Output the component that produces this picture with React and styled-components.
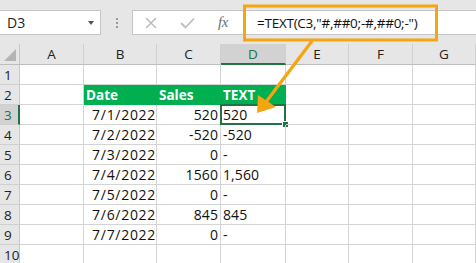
import React from "react"
import styled, { createGlobalStyle, css } from "styled-components"

const GlobalStyle = createGlobalStyle`
  html, body { margin: 0; padding: 0; background: #fff; }
  body { font-family: "Open Sans", "Liberation Sans", sans-serif; overflow: hidden; }
`

const Page = styled.div`
  position: relative;
  width: 476px;
  height: 263px;
  overflow: hidden;
  background: #fff;
`

const FormulaBar = styled.div`
  display: flex;
  align-items: center;
  height: 44px;
  background: #e6e6e6;
  box-sizing: border-box;
  padding-top: 1px;
`

const NameBox = styled.div`
  display: flex;
  align-items: center;
  justify-content: space-between;
  width: 101px;
  height: 25px;
  box-sizing: border-box;
  background: #fff;
  border: 1px solid #c6c6c6;
  border-left: none;
  padding: 0 6px 0 7px;
  font-size: 14px;
  color: #222;
`

const Caret = styled.span`
  width: 0;
  height: 0;
  border-left: 3.5px solid transparent;
  border-right: 3.5px solid transparent;
  border-top: 4px solid #555;
`

const Dots = styled.div`
  width: 31px;
  display: flex;
  flex-direction: column;
  align-items: center;
  gap: 2px;
  span {
    width: 2px;
    height: 2px;
    background: #9a9a9a;
  }
`

const FormulaBox = styled.div`
  flex: 1;
  display: flex;
  align-items: center;
  height: 25px;
  box-sizing: border-box;
  background: #fff;
  border: 1px solid #c6c6c6;
  border-right: none;
`

const IconSlot = styled.div`
  width: ${p => p.w}px;
  display: flex;
  justify-content: center;
  align-items: center;
`

const Fx = styled.span`
  font-family: "Liberation Serif", serif;
  font-style: italic;
  font-size: 15px;
  color: #6f6f6f;
  letter-spacing: -0.5px;
`

const FormulaText = styled.div`
  margin-left: 16px;
  font-size: 13.5px;
  color: #111;
  white-space: nowrap;
  letter-spacing: -0.25px;
`

const Grid = styled.div`
  display: grid;
  grid-template-columns: 20px 64px 73px 64px 65px 63px 64px 1fr;
  grid-template-rows: 21px repeat(10, 20px);
`

const headerBase = css`
  background: ${p => (p.active ? "#d2d2d2" : "#e6e6e6")};
  color: ${p => (p.active ? "#217346" : "#222")};
  font-size: 13.5px;
  box-sizing: border-box;
  display: flex;
  align-items: center;
`

const Corner = styled.div`
  ${headerBase};
  position: relative;
  border-right: 1px solid #c8c8c8;
  border-bottom: 1px solid #bdbdbd;
  &::after {
    content: "";
    position: absolute;
    right: 3px;
    bottom: 3px;
    width: 0;
    height: 0;
    border-left: 12px solid transparent;
    border-bottom: 12px solid #b4b4b4;
  }
`

const ColHead = styled.div`
  ${headerBase};
  justify-content: center;
  border-right: 1px solid #d0d0d0;
  border-bottom: ${p => (p.active ? "2px solid #217346" : "1px solid #bdbdbd")};
  padding-top: ${p => (p.active ? "1px" : "0")};
`

const RowHead = styled.div`
  ${headerBase};
  padding-left: 4px;
  border-right: ${p => (p.active ? "2px solid #217346" : "1px solid #c8c8c8")};
  border-bottom: 1px solid #d0d0d0;
`

const Cell = styled.div`
  position: relative;
  box-sizing: border-box;
  display: flex;
  align-items: center;
  justify-content: ${p => (p.right ? "flex-end" : "flex-start")};
  padding: 0 ${p => (p.date ? "0" : "2px")} 0 2px;
  font-size: 14px;
  letter-spacing: ${p => (p.date ? "0.7px" : "0.1px")};
  color: #111;
  white-space: nowrap;
  border-right: 1px solid ${p => (p.head ? "#00b050" : "#d4d4d4")};
  border-bottom: 1px solid ${p => (p.head ? "#00b050" : "#d4d4d4")};
  ${p =>
    p.head &&
    css`
      background: #00b050;
      color: #fff;
      font-weight: 700;
      font-size: 13.5px;
      letter-spacing: 0;
    `}
  ${p =>
    p.selected &&
    css`
      &::before {
        content: "";
        position: absolute;
        left: -1px;
        top: -1px;
        right: -1px;
        bottom: -1px;
        border: 2px solid #217346;
      }
      &::after {
        content: "";
        position: absolute;
        right: -4px;
        bottom: -4px;
        width: 5px;
        height: 5px;
        background: #217346;
        border: 1px solid #fff;
      }
    `}
`

const Annotation = styled.svg`
  position: absolute;
  left: 0;
  top: 0;
  pointer-events: none;
`

const columns = ["A", "B", "C", "D", "E", "F", "G"]

const data = [
  ["7/1/2022", "520", "520"],
  ["7/2/2022", "-520", "-520"],
  ["7/3/2022", "0", "-"],
  ["7/4/2022", "1560", "1,560"],
  ["7/5/2022", "0", "-"],
  ["7/6/2022", "845", "845"],
  ["7/7/2022", "0", "-"],
]

const Row = ({ n, children }) => (
  <>
    <RowHead active={n === 3}>{n}</RowHead>
    {children}
  </>
)

export default function App() {
  const rows = []
  for (let n = 1; n <= 10; n++) {
    let cells
    if (n === 2) {
      cells = [
        <Cell key="a" />,
        <Cell key="b" head>Date</Cell>,
        <Cell key="c" head>Sales</Cell>,
        <Cell key="d" head>TEXT</Cell>,
      ]
    } else if (n >= 3 && n <= 9) {
      const [date, sales, text] = data[n - 3]
      cells = [
        <Cell key="a" />,
        <Cell key="b" right date>{date}</Cell>,
        <Cell key="c" right>{sales}</Cell>,
        <Cell key="d" selected={n === 3}>{text}</Cell>,
      ]
    } else {
      cells = [<Cell key="a" />, <Cell key="b" />, <Cell key="c" />, <Cell key="d" />]
    }
    rows.push(
      <Row key={n} n={n}>
        {cells}
        <Cell />
        <Cell />
        <Cell />
      </Row>
    )
  }

  return (
    <Page>
      <GlobalStyle />
      <FormulaBar>
        <NameBox>
          <span>D3</span>
          <Caret />
        </NameBox>
        <Dots>
          <span />
          <span />
          <span />
        </Dots>
        <FormulaBox>
          <IconSlot w={36}>
            <svg width="12" height="12" viewBox="0 0 12 12">
              <path d="M1 1L11 11M11 1L1 11" stroke="#bdbdbd" strokeWidth="1.6" />
            </svg>
          </IconSlot>
          <IconSlot w={36}>
            <svg width="15" height="12" viewBox="0 0 15 12">
              <path d="M1 6L5.5 10.5L14 1.5" stroke="#bdbdbd" strokeWidth="1.8" fill="none" />
            </svg>
          </IconSlot>
          <IconSlot w={36}>
            <Fx>fx</Fx>
          </IconSlot>
          <FormulaText>=TEXT(C3,"#,##0;-#,##0;-")</FormulaText>
        </FormulaBox>
      </FormulaBar>
      <Grid>
        <Corner />
        {columns.map(c => (
          <ColHead key={c} active={c === "D"}>
            {c}
          </ColHead>
        ))}
        {rows}
      </Grid>
      <Annotation width="476" height="263" viewBox="0 0 476 263">
        <rect x="244.5" y="6" width="192" height="34" fill="none" stroke="#f5a50f" strokeWidth="3" />
        <line x1="312" y1="41" x2="266" y2="102" stroke="#f5a50f" strokeWidth="3.2" />
        <polygon points="257,113 258,95 276,107" fill="#f5a50f" />
      </Annotation>
    </Page>
  )
}
